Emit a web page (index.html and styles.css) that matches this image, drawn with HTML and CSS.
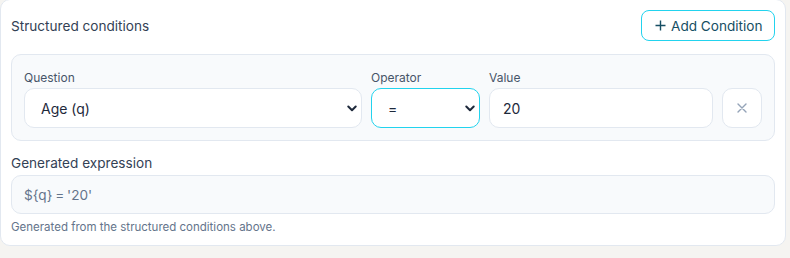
FILE: index.html
```html
<!DOCTYPE html>
<html lang="en">
<head>
    <meta charset="UTF-8">
    <meta name="viewport" content="width=device-width, initial-scale=1.0">
    <title>Structured conditions</title>
    <link rel="stylesheet" href="styles.css">
</head>
<body>

    <div class="card">
        <!-- Cabeçalho -->
        <div class="card-header">
            <h3 class="card-title">Structured conditions</h3>
            <button type="button" class="btn-add">
                <svg width="11" height="11" viewBox="0 0 11 11"><path d="M5.5 0.5v10M0.5 5.5h10" stroke="currentColor" stroke-width="1.4" fill="none"/></svg>
                Add Condition
            </button>
        </div>

        <!-- Condição -->
        <div class="condition">
            <div class="field">
                <label for="question">Question</label>
                <div class="select-wrap">
                    <select id="question" class="control">
                        <option>Age (q)</option>
                    </select>
                    <svg class="chevron" width="10" height="7" viewBox="0 0 10 7"><path d="M1.3 1.5L5 5.2L8.7 1.5" stroke="currentColor" stroke-width="2" fill="none" stroke-linecap="round" stroke-linejoin="round"/></svg>
                </div>
            </div>
            <div class="field">
                <label for="operator">Operator</label>
                <div class="select-wrap">
                    <select id="operator" class="control focused">
                        <option>=</option>
                    </select>
                    <svg class="chevron" width="10" height="7" viewBox="0 0 10 7"><path d="M1.3 1.5L5 5.2L8.7 1.5" stroke="currentColor" stroke-width="2" fill="none" stroke-linecap="round" stroke-linejoin="round"/></svg>
                </div>
            </div>
            <div class="field">
                <label for="value">Value</label>
                <input type="text" id="value" class="control control-input" value="20">
            </div>
            <button type="button" class="btn-remove" aria-label="Remove">
                <svg width="10" height="10" viewBox="0 0 10 10"><path d="M1 1L9 9M9 1L1 9" stroke="currentColor" stroke-width="1.4" fill="none" stroke-linecap="round"/></svg>
            </button>
        </div>

        <!-- Expressão -->
        <div class="expression">
            <label class="expr-label">Generated expression</label>
            <div class="expr-box">${q} = '20'</div>
            <p class="hint">Generated from the structured conditions above.</p>
        </div>
    </div>

</body>
</html>
```

FILE: styles.css
```css
body {
    font-family: 'Inter', 'Liberation Sans', sans-serif;
    background-color: #f5f4f1;
    color: #334155;
    margin: 0;
}
.card {
    background-color: #fff;
    border: 1px solid #e2e8f0;
    border-radius: 10px;
    width: 764px;
    margin-top: -1px;
    padding: 10px;
}
.card-header {
    display: flex;
    justify-content: space-between;
    align-items: center;
    height: 31px;
}
.card-title {
    margin: 0;
    font-size: 13.6px;
    font-weight: 400;
    color: #334155;
}
.btn-add {
    display: flex;
    align-items: center;
    gap: 5px;
    height: 31px;
    width: 134px;
    padding: 0 0 0 13px;
    background-color: #fff;
    border: 1px solid #22d3ee;
    border-radius: 8px;
    color: #164e63;
    font-family: inherit;
    font-size: 13.6px;
    cursor: pointer;
}
.condition {
    display: grid;
    grid-template-columns: 338px 109px 224px 40px;
    column-gap: 9px;
    align-items: end;
    margin-top: 13px;
    padding: 12px;
    background-color: #f8fafc;
    border: 1px solid #e2e8f0;
    border-radius: 10px;
}
.field label {
    display: block;
    font-size: 12px;
    line-height: 18px;
    padding-top: 2px;
    margin-bottom: 1px;
    color: #475569;
}
.select-wrap {
    position: relative;
}
.control {
    display: block;
    width: 100%;
    height: 40px;
    box-sizing: border-box;
    padding: 0 16px;
    background-color: #fff;
    border: 1px solid #e2e8f0;
    border-radius: 10px;
    font-family: inherit;
    font-size: 14px;
    color: #1e293b;
    appearance: none;
    outline: none;
}
.control-input {
    padding: 0 13px;
}
.control.focused {
    border-color: #22d3ee;
}
.chevron {
    position: absolute;
    right: 5px;
    top: 17px;
    color: #1e293b;
    pointer-events: none;
}
.btn-remove {
    display: flex;
    align-items: center;
    justify-content: center;
    width: 40px;
    height: 40px;
    padding: 0;
    background-color: #fff;
    border: 1px solid #e2e8f0;
    border-radius: 10px;
    color: #94a3b8;
    cursor: pointer;
}
.expression {
    margin-top: 12px;
}
.expr-label {
    display: block;
    font-size: 13.6px;
    line-height: 20px;
    margin-bottom: 2px;
    color: #334155;
}
.expr-box {
    height: 39px;
    box-sizing: border-box;
    padding: 0 12px;
    display: flex;
    align-items: center;
    background-color: #f8fafc;
    border: 1px solid #e2e8f0;
    border-radius: 10px;
    font-size: 13.6px;
    word-spacing: -1px;
    color: #64748b;
}
.hint {
    margin: 5px 0 0;
    font-size: 11.5px;
    line-height: 16px;
    color: #64748b;
}
```
